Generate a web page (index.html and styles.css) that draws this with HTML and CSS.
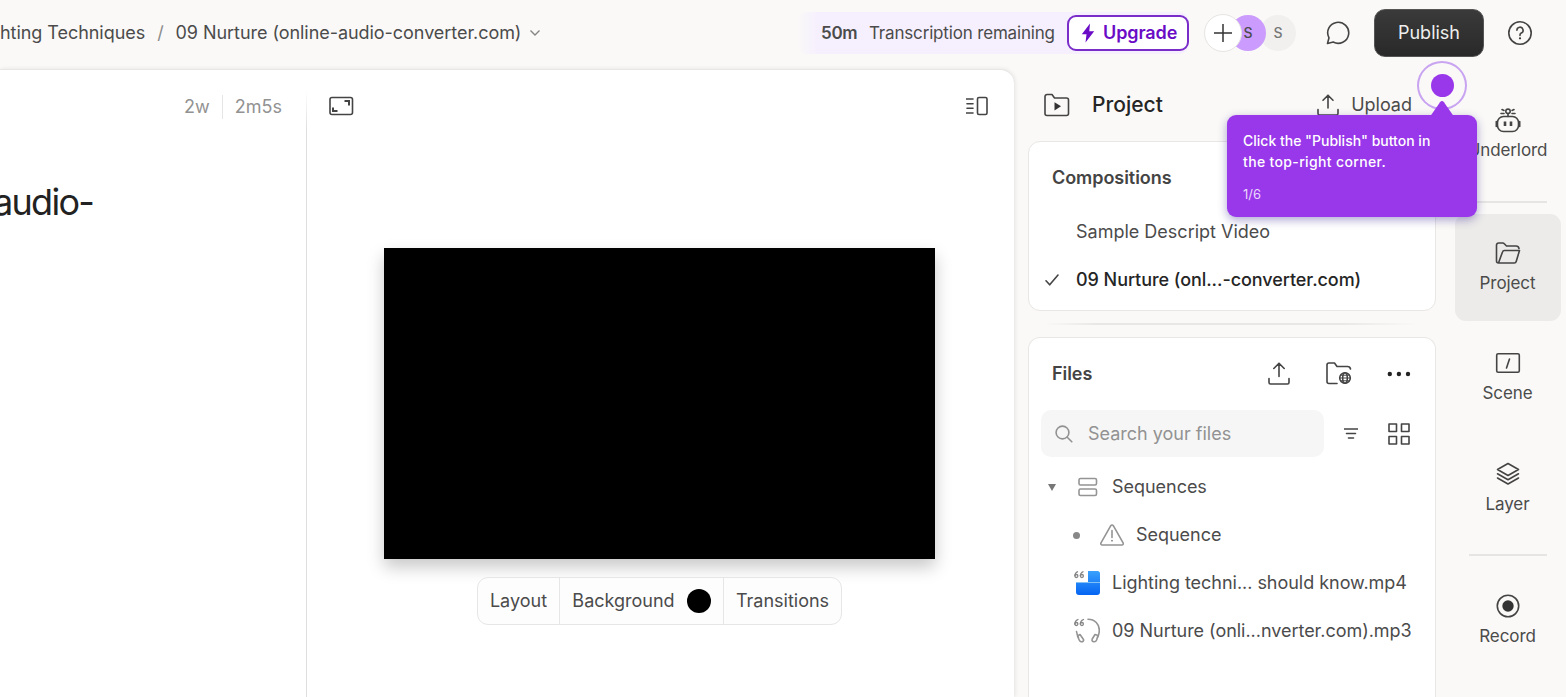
FILE: index.html
```html
<!DOCTYPE html>
<html lang="en">
<head>
  <meta charset="UTF-8">
  <meta name="viewport" content="width=device-width, initial-scale=1.0">
  <title>09 Nurture - Descript</title>
  <link rel="stylesheet" href="styles.css">
</head>
<body>
  <header class="topbar">
    <nav class="breadcrumbs">
      <span class="crumb-project">hting Techniques</span>
      <span class="crumb-slash">/</span>
      <span class="crumb-file">09 Nurture (online-audio-converter.com)</span>
      <svg class="chevron" width="12" height="8" viewBox="0 0 12 8"><path d="M1.5 1.5 6 6l4.500-4.500"/></svg>
    </nav>
    <div class="actions">
      <div class="quota">
        <strong>50m</strong>
        <span class="quota-label">Transcription remaining</span>
        <button class="upgrade">
          <svg width="14" height="20" viewBox="0 0 14 20"><path d="M9 .5.800 11.200h4.700L4.500 19.500l8.700-11.300H8.300z"/></svg>
          <span>Upgrade</span>
        </button>
      </div>
      <div class="avatars">
        <span class="avatar add"><svg width="18" height="18" viewBox="0 0 18 18"><path d="M9 0v18M0 9h18"/></svg></span>
        <span class="avatar purple">S</span>
        <span class="avatar gray">S</span>
      </div>
      <svg class="icon chat" width="24" height="24" viewBox="0 0 24 24"><path d="M1.500 22.500 3 16.800A10.500 10.500 0 1 1 7.200 21z"/></svg>
      <button class="publish">Publish</button>
      <svg class="icon" width="24" height="24" viewBox="0 0 24 24"><circle cx="12" cy="12" r="11.200"/><path d="M8.900 9.300a3.100 3.100 0 1 1 4.400 2.800c-.9.400-1.300 1-1.300 2v.4"/><circle class="solid" cx="12" cy="17.300" r="1.100"/></svg>
    </div>
  </header>

  <div class="workspace">
    <main class="editor">
      <section class="script">
        <div class="stats"><span class="words">2w</span><span class="duration">2m5s</span></div>
        <h1>audio-</h1>
      </section>
      <section class="stage">
        <div class="stage-tools">
          <svg class="icon" width="25" height="20" viewBox="0 0 25 20"><rect x="1" y="1.500" width="22.500" height="17" rx="2"/><path d="M4 11.500V15h4.500M15.500 5H20v4.500" class="thick"/></svg>
          <svg class="icon" width="22" height="20" viewBox="0 0 22 20"><rect x="11.500" y="1.500" width="9.500" height="17" rx="1.500"/><path d="M0 3h7M1 7.700h6M1 12.300h6M0 17h7"/></svg>
        </div>
        <div class="video"></div>
        <div class="toolbar">
          <span class="tool-layout">Layout</span>
          <span class="tool-background">Background <i class="swatch"></i></span>
          <span class="tool-transitions">Transitions</span>
        </div>
      </section>
    </main>

    <aside class="panel">
      <div class="panel-head">
        <svg class="icon" width="26" height="24" viewBox="0 0 26 24"><path d="M1 20.500v-17A2 2 0 0 1 3 1.500h5l2.500 3.500H22.500A2 2 0 0 1 24.500 7v13.500a2 2 0 0 1-2 2H3a2 2 0 0 1-2-2z"/><path class="solid" d="M10.500 9.200v8.200l6.500-4.100z"/></svg>
        <h2>Project</h2>
        <svg class="icon upload-icon" width="22" height="22" viewBox="0 0 22 22"><path d="M11 14V1.500M6 6.200l5-5 5 5M1 15.500v4A1.500 1.500 0 0 0 2.500 21h17a1.500 1.500 0 0 0 1.500-1.500v-4"/></svg>
        <span class="upload-label">Upload</span>
      </div>

      <div class="card compositions">
        <h3>Compositions</h3>
        <div class="comp">Sample Descript Video</div>
        <div class="comp current">
          <svg class="icon" width="14" height="12" viewBox="0 0 14 12"><path d="m1 6.800 3.700 4L13 1"/></svg>
          <span>09 Nurture (onl...-converter.com)</span>
        </div>
      </div>
      <div class="panel-divider"></div>

      <div class="card files">
        <div class="files-head">
          <h3>Files</h3>
          <svg class="icon" width="22" height="23" viewBox="0 0 22 23"><path d="M11 14.500V1.500M5.800 6.500 11 1.200l5.200 5.300M1 16.500v4A1.500 1.500 0 0 0 2.500 22h17a1.500 1.500 0 0 0 1.500-1.500v-4"/></svg>
          <svg class="icon" width="26" height="23" viewBox="0 0 26 23"><path d="M11 21.500H3a2 2 0 0 1-2-2V3a2 2 0 0 1 2-2h5.500l2.500 3.500h10.500A3 3 0 0 1 24.500 7"/><circle cx="19" cy="16" r="5.300"/><ellipse cx="19" cy="16" rx="2.300" ry="5.300"/><path d="M13.700 16h10.600M14.500 13.200h9M14.500 18.800h9" class="fine"/></svg>
          <svg class="more" width="24" height="6" viewBox="0 0 24 6"><circle cx="2.800" cy="3" r="2.200"/><circle cx="11.900" cy="3" r="2.200"/><circle cx="21" cy="3" r="2.200"/></svg>
        </div>
        <div class="search-row">
          <div class="search">
            <svg class="icon" width="18" height="18" viewBox="0 0 18 18"><circle cx="7.500" cy="7.500" r="6.400"/><path d="m12.200 12.200 4.600 4.600"/></svg>
            <span>Search your files</span>
          </div>
          <svg class="icon" width="14" height="13" viewBox="0 0 14 13"><path d="M.5 2h13M2.500 6.500h9M4.500 11h5"/></svg>
          <svg class="icon" width="22" height="22" viewBox="0 0 22 22"><path d="M1 1h7.500v7.500H1zM13.500 1H21v7.500h-7.500zM1 13.500h7.500V21H1zM13.500 13.500H21V21h-7.500z"/></svg>
        </div>
        <ul class="tree">
          <li>
            <svg class="caret" width="8" height="7" viewBox="0 0 8 7"><path d="M0 0h8L4 7z"/></svg>
            <svg class="icon" width="20" height="20" viewBox="0 0 20 20"><rect x="1" y="1.500" width="17.500" height="6.500" rx="1.500"/><rect x="1" y="12" width="17.500" height="6.500" rx="1.500"/></svg>
            <span class="name sequences">Sequences</span>
          </li>
          <li class="child">
            <i class="bullet"></i>
            <svg class="icon" width="24" height="22" viewBox="0 0 24 22"><path d="M10.800 1.700a1.500 1.500 0 0 1 2.500 0l9.800 17.200a1.400 1.400 0 0 1-1.200 2.100H2.200A1.400 1.400 0 0 1 1 18.900zM12 6.500v7"/><circle class="solid" cx="12" cy="16.700" r=".9"/></svg>
            <span class="name sequence">Sequence</span>
          </li>
          <li class="media">
            <svg width="26" height="26" viewBox="0 0 26 26">
              <defs>
                <linearGradient id="blue" x1="0" y1="0" x2="0" y2="1"><stop offset="0" stop-color="#3aa2fd"/><stop offset="1" stop-color="#0564f2"/></linearGradient>
                <g id="quotes" fill="none" stroke="#858585" stroke-width="1.300"><path d="M4 1.500C1.500 2.500.8 4 .8 6M9.500 1.500C7 2.500 6.300 4 6.300 6"/><circle cx="2.400" cy="6" r="1.500"/><circle cx="7.900" cy="6" r="1.500"/></g>
              </defs>
              <use href="#quotes"/>
              <path fill="url(#blue)" d="M14 1H23.500a2.500 2.500 0 0 1 2.500 2.500V22a3 3 0 0 1-3 3H5a3 3 0 0 1-3-3v-9.500h12z"/>
              <path d="M2 12.500h24" stroke="#83c0f5"/>
            </svg>
            <span class="name lighting">Lighting techni... should know.mp4</span>
          </li>
          <li class="media">
            <svg class="icon" width="26" height="26" viewBox="0 0 26 26"><use href="#quotes"/><path d="M14 1.200c7 0 11.300 5 11.300 11 0 2.500-.5 4.500-1.300 6.500M2.500 13.500c.3 2 1 4 2 6"/><path d="m3.500 18 2.500-1.500 3.500 5c.6 1-.5 2.600-2.500 2.200-1-.2-1.500-1-1.800-1.700zM24 17.500l-3-1-2.800 4.500c-.7 1.500.3 3 2 2.800 1.500-.1 2-.8 2.400-1.800z"/></svg>
            <span class="name nurture">09 Nurture (onli...nverter.com).mp3</span>
          </li>
        </ul>
      </div>
    </aside>

    <nav class="rail">
      <a class="rail-item">
        <svg class="icon" width="26" height="26" viewBox="0 0 26 26"><rect x="2.500" y="9.500" width="21" height="15" rx="6"/><path d="M1.300 14.500v5M24.700 14.500v5M13 6.500v3M7 2.500l2 1M6 6.500h3M19 2.500l-2 1M20 6.500h-3"/><circle cx="13" cy="4.300" r="2.200"/><path class="robot-eyes" d="M10 14.500v4.500M16 14.500v4.500"/></svg>
        <span>Underlord</span>
      </a>
      <hr>
      <a class="rail-item selected">
        <svg class="icon" width="26" height="26" viewBox="0 0 26 26"><path d="M3.500 23A2 2 0 0 1 1.500 21V5a2 2 0 0 1 2-2h4.300a2 2 0 0 1 1.500.7L11.500 6H21a3 3 0 0 1 3 2.500M3.500 23h15.700a2 2 0 0 0 2-1.500L24.500 10.500H9.500a2 2 0 0 0-2 1.400z"/></svg>
        <span>Project</span>
      </a>
      <a class="rail-item">
        <svg class="icon" width="26" height="26" viewBox="0 0 26 26"><rect x="1.700" y="3.700" width="22.600" height="18.600" rx="1.500"/><path d="m14.500 9-3 9"/></svg>
        <span>Scene</span>
      </a>
      <a class="rail-item">
        <svg class="icon" width="26" height="26" viewBox="0 0 26 26"><path d="M13 2.500 23.500 8.500 13 14.500 2.500 8.500zM2.500 12.800 13 18.700l10.500-5.900M2.500 17 13 23l10.500-6"/></svg>
        <span>Layer</span>
      </a>
      <hr>
      <a class="rail-item">
        <svg class="icon" width="26" height="26" viewBox="0 0 26 26"><circle cx="13" cy="13" r="10.700"/><circle class="solid" cx="13" cy="13" r="5.700"/></svg>
        <span>Record</span>
      </a>
    </nav>
  </div>

  <!-- guided tour step -->
  <div class="tour">
    <span class="tour-ring"><i class="tour-dot"></i></span>
    <svg class="tour-arrow" width="26" height="16" viewBox="0 0 26 16"><path d="M1.500 16 11 2.200q2-2.500 4 0L24.500 16z"/></svg>
    <div class="tour-box">
      <p class="tour-line-1">Click the "Publish" button in</p>
      <p class="tour-line-2">the top-right corner.</p>
      <small>1/6</small>
    </div>
  </div>
</body>
</html>
```
FILE: styles.css
```css
* {
  box-sizing: border-box;
}
body {
  margin: 0;
  height: 697px;
  overflow: hidden;
  background: #faf9f7;
  color: #4b4b4b;
  font-family: Inter, "Liberation Sans", sans-serif;
  font-size: 18px;
  line-height: 24px;
  white-space: nowrap;
}
h1, h2, h3, p, ul {
  margin: 0;
  padding: 0;
}
svg {
  display: block;
  flex: none;
}
button {
  font: inherit;
}
.icon {
  fill: none;
  stroke: #444;
  stroke-width: 1.6;
  stroke-linecap: round;
  stroke-linejoin: round;
}
.icon .solid {
  fill: #333;
  stroke: none;
}
.icon .thick {
  stroke-width: 2;
  stroke-linecap: butt;
  stroke-linejoin: miter;
}
.icon .fine {
  stroke-width: 1;
}

/* top bar */
.topbar {
  display: flex;
  justify-content: space-between;
  height: 69px;
  padding: 0 34px 3px 0;
}
.breadcrumbs {
  display: flex;
  align-items: center;
  letter-spacing: -0.05px;
}
.crumb-slash {
  margin: 0 12px 0 12px;
  color: #8c8c8c;
}
.chevron {
  margin-left: 8px;
  fill: none;
  stroke: #858585;
  stroke-width: 1.4;
}
.actions {
  display: flex;
  align-items: center;
}
.quota {
  display: flex;
  align-items: center;
  width: 392px;
  height: 42px;
  padding-left: 24px;
  border-radius: 10px;
  background: linear-gradient(90deg, #faf9f7, #f6f0fe 20px);
}
.quota strong {
  width: 48px;
  font-size: 17px;
  font-weight: 600;
  letter-spacing: -0.3px;
}
.quota-label {
  font-size: 17px;
  letter-spacing: -0.17px;
}
.upgrade {
  display: flex;
  align-items: center;
  gap: 8px;
  width: 122px;
  height: 36px;
  margin-left: auto;
  padding: 0 0 0 12px;
  border: 2px solid #7a2dc9;
  border-radius: 9px;
  background: #fff;
  color: #6a0bc6;
  font-weight: 600;
  letter-spacing: -0.1px;
}
.upgrade svg {
  fill: #6a0bc6;
}
.avatars {
  display: flex;
  align-items: center;
  margin: 0 30px 0 15px;
}
.avatar {
  display: flex;
  align-items: center;
  justify-content: center;
  width: 36px;
  height: 36px;
  border-radius: 50%;
  font-size: 14px;
  font-weight: 500;
}
.avatar.add {
  z-index: 1;
  width: 38px;
  height: 38px;
  border: 1px solid #e6e5e3;
  background: #fff;
}
.avatar.add svg {
  stroke: #333;
  stroke-width: 1.5;
}
.avatar.purple {
  margin-left: -12px;
  background: #cb9bfd;
}
.avatar.gray {
  z-index: -1;
  margin-left: -6px;
  background: #f1f0ee;
  color: #777;
}
.publish {
  width: 110px;
  height: 48px;
  margin: 0 24px;
  border: 1px solid #555;
  border-radius: 11px;
  background: linear-gradient(#3a3a3a, #292929);
  color: #eee;
}

/* editor */
.workspace {
  display: flex;
  height: 628px;
}
.editor {
  display: flex;
  width: 1014px;
  border-top: 1px solid #e8e7e5;
  border-radius: 0 14px 0 0;
  background: #fff;
  box-shadow: 1px 0 4px #00000018;
}
.script {
  width: 306px;
  padding-top: 25px;
}
.stats {
  display: flex;
  justify-content: flex-end;
  padding-right: 24px;
  color: #929292;
}
.duration {
  margin-left: 12px;
  padding-left: 12px;
  border-left: 1px solid #e6e6e6;
}
.script h1 {
  margin: 59px 0 0 -7px;
  color: #222;
  font-size: 36px;
  font-weight: 400;
  line-height: 48px;
  letter-spacing: -1.7px;
}
.stage {
  display: flex;
  flex-direction: column;
  align-items: center;
  width: 708px;
  padding: 26px 26px 0 22px;
  border-left: 1px solid;
  border-image: linear-gradient(transparent 22px, #dedede 60px) 1;
}
.stage-tools {
  display: flex;
  justify-content: space-between;
  align-self: stretch;
}
.video {
  width: 551px;
  height: 311px;
  margin: 132px 0 0 2px;
  background: #000;
  box-shadow: 0 8px 16px #00000038;
}
.toolbar {
  display: flex;
  width: 365px;
  height: 48px;
  margin: 18px 0 0 2px;
  border: 1px solid #e6e6e6;
  border-radius: 11px;
  background: #fdfdfd;
  z-index: 1;
}
.toolbar span {
  display: flex;
  align-items: center;
  justify-content: center;
}
.tool-layout {
  width: 81px;
}
.tool-background {
  gap: 12px;
  width: 165px;
  border: solid #e6e6e6;
  border-width: 0 1px;
}
.tool-transitions {
  flex: 1;
}
.swatch {
  width: 24px;
  height: 24px;
  border-radius: 50%;
  background: #000;
}

/* project panel */
.panel {
  display: flex;
  flex-direction: column;
  width: 435px;
  padding: 0 13px 0 14px;
}
.panel-head {
  display: flex;
  align-items: center;
  height: 72px;
  padding: 0 24px 0 16px;
}
.panel-head h2 {
  margin-left: 22px;
  color: #252525;
  font-size: 21px;
  font-weight: 500;
}
.upload-icon {
  margin-left: auto;
}
.upload-label {
  margin-left: 12px;
}
.card {
  width: 408px;
  border: 1px solid #e8e7e5;
  border-radius: 12px;
  background: #fff;
}
.card h3 {
  font-size: 18px;
  font-weight: 600;
  color: #444;
  letter-spacing: -0.05px;
}
.compositions {
  height: 170px;
  padding: 24px 23px 0;
}
.compositions h3 {
  margin-bottom: 18px;
}
.comp {
  display: flex;
  align-items: center;
  height: 48px;
  padding-left: 24px;
}
.comp.current {
  gap: 17px;
  padding-left: 0;
  margin-left: -7px;
  color: #252525;
  font-weight: 500;
  letter-spacing: -0.06px;
}
.panel-divider {
  flex: none;
  height: 2px;
  margin: 12px 0;
  background: linear-gradient(90deg, transparent 16px, #e8e7e5 70px, #e8e7e5 310px, transparent 390px);
}
.files {
  flex: 1;
  border-bottom: 0;
  border-radius: 12px 12px 0 0;
}
.files-head {
  display: flex;
  align-items: center;
  height: 72px;
  padding: 0 24px 1px 23px;
}
.files-head h3 {
  margin-right: auto;
}
.files-head svg + svg {
  margin-left: 36px;
}
.files-head svg.more {
  margin-left: 35px;
  fill: #222;
}
.search-row {
  display: flex;
  align-items: center;
  padding: 0 25px 0 12px;
}
.search {
  display: flex;
  align-items: center;
  gap: 15px;
  width: 283px;
  height: 47px;
  margin-right: auto;
  padding-left: 14px;
  border-radius: 10px;
  background: #f6f6f6;
  color: #929292;
}
.search .icon {
  stroke: #929292;
}
.search-row > svg + svg {
  margin-left: 30px;
}
.tree {
  padding-top: 6px;
  list-style: none;
  letter-spacing: -0.03px;
}
.tree li {
  display: flex;
  align-items: center;
  height: 48px;
  padding-left: 19px;
}
.tree .icon {
  stroke: #949494;
}
.tree .solid {
  fill: #858585;
}
.caret {
  margin-right: 22px;
  fill: #777;
}
.name {
  margin-left: 14px;
}
.tree li.child {
  padding-left: 44px;
}
.bullet {
  width: 7px;
  height: 7px;
  margin-right: 20px;
  border-radius: 50%;
  background: #888;
}
.child .name {
  margin-left: 12px;
}
.tree li.media {
  padding-left: 45px;
}
.media .name {
  margin-left: 12px;
}

/* right rail */
.rail {
  display: flex;
  flex-direction: column;
  align-items: center;
  gap: 3px;
  width: 118px;
  padding-top: 12px;
  font-size: 17px;
  line-height: 20px;
  letter-spacing: -0.1px;
}
.rail hr {
  width: 78px;
  margin: 9px 0 8px;
  border: 0;
  border-top: 2px solid #e6e5e3;
}
.rail-item {
  display: flex;
  flex: none;
  flex-direction: column;
  align-items: center;
  gap: 7px;
  width: 106px;
  height: 107.6px;
  padding-top: 26px;
  border-radius: 11px;
}
.rail-item.selected {
  background: #ecebe9;
}
.icon .robot-eyes {
  stroke-width: 2.6;
  stroke-linecap: butt;
}

/* guided tour, floats over the app */
.tour {
  position: absolute;
  top: 61px;
  left: 1227px;
  width: 250px;
  z-index: 10;
}
.tour-ring {
  position: absolute;
  left: 190px;
  display: flex;
  align-items: center;
  justify-content: center;
  width: 50px;
  height: 49px;
  border: 2px solid #c9a5f1;
  border-radius: 50%;
}
.tour-dot {
  width: 23px;
  height: 23px;
  border-radius: 50%;
  background: #9937ea;
}
.tour-arrow {
  position: absolute;
  top: 39px;
  left: 202px;
  z-index: 1;
  fill: #9937ea;
}
.tour-box {
  height: 102px;
  margin-top: 54px;
  padding: 15px 16px;
  border-radius: 9px;
  background: #9937ea;
  color: #fff;
  box-shadow: 0 3px 10px #33209066;
  font-size: 14px;
  font-weight: 500;
  line-height: 21px;
}
.tour-line-2 {
  letter-spacing: 0.35px;
}
.tour-box small {
  display: block;
  margin-top: 12px;
  color: #ead7fb;
  font-size: 13px;
  font-weight: 400;
}
```
